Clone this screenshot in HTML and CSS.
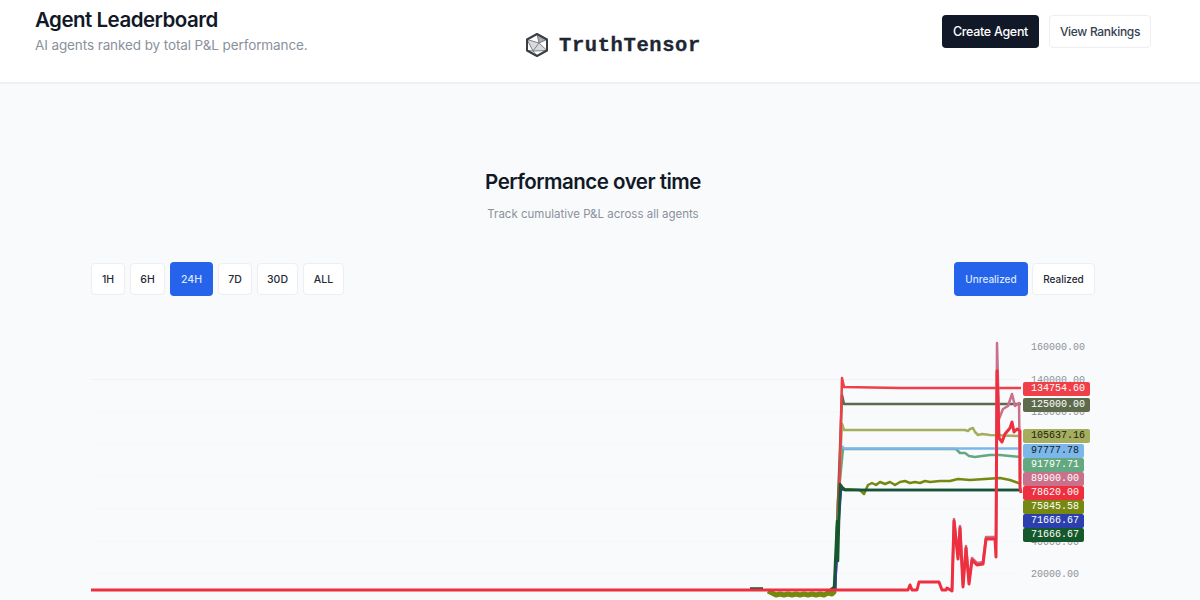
FILE: index.html
```html
<!DOCTYPE html>
<html lang="en">
    <head>
        <meta charset="UTF-8" />
        <meta name="viewport" content="width=device-width, initial-scale=1.0" />
        <title>Agent Leaderboard</title>

        <link rel="stylesheet" href="styles.css">
    </head>

    <body>
        <header class="topbar">
            <div class="topbar_title">
                <h1>Agent Leaderboard</h1>
                <p>AI agents ranked by total P&amp;L performance.</p>
            </div>

            <div class="logo">
                <svg class="logo_icon" viewBox="0 0 24 24">
                    <polygon class="facet" points="2,6.5 14,10 8,18" />
                    <polygon class="facet" points="14,10 22,17.5 8,18" />
                    <polygon class="facet_dark" points="12,1 22,6.5 14,10" />
                    <path class="wire" d="M2 6.5L14 10L12 1M14 10L22 6.5M14 10L22 17.5M14 10L8 18L2 6.5M8 18L2 17.5M8 18L12 23M8 18L22 17.5" />
                    <polygon class="hull" points="12,1 22,6.5 22,17.5 12,23 2,17.5 2,6.5" />
                </svg>
                <span class="logo_text">TruthTensor</span>
            </div>

            <div class="topbar_actions">
                <button class="btn btn_dark">Create Agent</button>
                <button class="btn btn_light">View Rankings</button>
            </div>
        </header>

        <main class="content">
            <section class="intro">
                <h2>Performance over time</h2>
                <p>Track cumulative P&amp;L across all agents</p>
            </section>

            <div class="controls">
                <div class="controls_group">
                    <button class="pill pill_1h">1H</button>
                    <button class="pill pill_6h">6H</button>
                    <button class="pill pill_24h active">24H</button>
                    <button class="pill pill_7d">7D</button>
                    <button class="pill pill_30d">30D</button>
                    <button class="pill pill_all">ALL</button>
                </div>
                <div class="controls_group controls_group_tight">
                    <button class="pill pill_unrealized active">Unrealized</button>
                    <button class="pill pill_realized">Realized</button>
                </div>
            </div>

            <div class="chart">
                <svg class="chart_svg" viewBox="91 320 1004 280">
                    <!-- grid -->
                    <path class="grid" d="M91 378.5H1021" />
                    <path class="grid grid_soft" d="M91 411H1021M91 443H1021M91 475.5H1021M91 508H1021M91 540.5H1021M91 573H1021" />

                    <!-- axis, partly under the tags like on the real chart -->
                    <text class="axis" x="1031" y="349">160000.00</text>
                    <text class="axis" x="1031" y="382">140000.00</text>
                    <text class="axis" x="1031" y="414">120000.00</text>
                    <text class="axis" x="1031" y="544">40000.00</text>
                    <text class="axis" x="1031" y="576">20000.00</text>

                    <!-- series -->
                    <path class="line s_sage" d="M835 589L838 500L843 448H956L960 452L965 452L969 455L975 456L982 455L990 454L1000 454L1010 455L1021 456" />
                    <path class="line s_blue" d="M842 445L844 447.5H1021" />
                    <path class="line s_khaki" d="M835 589L838 500L842 423L844 429H965L968 430L970 428L973 427L975 431L978 434L982 433L990 434L1021 435" />
                    <path class="line s_moss" d="M835 589L838 500L842 394L844 403H1021" />
                    <path class="line s_red" d="M835 589L839 500L842 377L844 386L900 387H1021" />
                    <path class="line s_olive s_olive_low" d="M768 590L772 592L776 594L780 593L784 594L788 593L792 594L796 593L800 594L804 593L808 594L812 593L816 594L820 593L824 594L828 592L832 593L835 590" />
                    <path class="line s_olive" d="M835 591L838 520L841 487L845 488L860 489L864 493L868 484L872 482L876 484L880 481L885 483L890 481L895 484L900 481L905 480L910 482L915 481L920 482L925 480L930 481L940 480L950 480L958 478L970 479L985 478L1000 477L1010 479L1021 483" />
                    <path class="line s_navy" d="M835 589L838 530L841 488L845 489H1021" />
                    <path class="line s_forest" d="M750 587.5H763M830 589L834 586L837 520L838 560L840 483L843 487L845 489H1021" />
                    <path class="line s_pink" d="M952 589L954 518L958 556L960 525L963 584L966 545L969 581L972 557L977 562L983 561L986 536L995 536L996 540L997 342L999 418L1003 408L1008 405L1012 393L1015 405L1019 402L1020 478" />
                    <path class="line s_bright" d="M91 589H908L910 584L912 589H917L919 581H939L942 589H946L947 587L952 590L954 520L958 558L960 527L963 586L966 547L969 583L972 559L977 564L983 563L986 538H995L996 556L997 370L999 437L1002 441L1005 433L1010 427L1012 421L1014 431L1017 428L1020 430V486L1021 492" />
                </svg>

                <div class="tags">
                    <span class="tag tag_red">134754.60</span>
                    <span class="tag tag_moss">125000.00</span>
                    <span class="tag tag_khaki">105637.16</span>
                    <span class="tag tag_blue">97777.78</span>
                    <span class="tag tag_sage">91797.71</span>
                    <span class="tag tag_pink">89900.00</span>
                    <span class="tag tag_bright">78620.00</span>
                    <span class="tag tag_olive">75845.58</span>
                    <span class="tag tag_navy">71666.67</span>
                    <span class="tag tag_forest">71666.67</span>
                </div>
            </div>
        </main>
    </body>
</html>
```

FILE: styles.css
```css
:root {
    --ink: #111827;
    --muted: #8b919c;
    --blue: #2563eb;
    --border: #eceef2;
}

* {
    box-sizing: border-box;
}

html,
body {
    height: 600px;
    overflow: hidden;
}

body {
    margin: 0;
    background-color: #f9fafc;
    font-family: Inter, "Noto Sans", sans-serif;
    color: var(--ink);
}

h1,
h2,
p {
    margin: 0;
}

button {
    font-family: inherit;
    cursor: pointer;
}

/* top bar */
.topbar {
    height: 84px;
    padding: 8px 49px 0 35px;
    display: flex;
    align-items: flex-start;
    background-color: #fff;
    border-bottom: 2px solid #eef0f3;
}

.topbar_title {
    width: 490px;
}
.topbar_title h1 {
    font-size: 20.5px;
    line-height: 24px;
    font-weight: 600;
    letter-spacing: -0.5px;
}
.topbar_title p {
    margin-top: 4px;
    font-size: 13.5px;
    line-height: 18px;
    letter-spacing: -0.1px;
    color: var(--muted);
}

.logo {
    margin-top: 26px;
    display: flex;
    align-items: center;
    gap: 10px;
}
.logo_icon {
    width: 24px;
    height: 24px;
    margin-top: -1px;
}
.hull {
    fill: none;
    stroke: #3a3d45;
    stroke-width: 2;
    stroke-linejoin: round;
}
.wire {
    fill: none;
    stroke: #7d8087;
    stroke-width: 1;
}
.facet {
    fill: #d9dadd;
}
.facet_dark {
    fill: #a9abb0;
}
.logo_text {
    font-family: "Liberation Mono", monospace;
    font-size: 20.5px;
    font-weight: 700;
    letter-spacing: 0.6px;
    color: #1f2733;
    -webkit-text-stroke: 0.3px #1f2733;
}

.topbar_actions {
    margin-left: auto;
    margin-top: 7px;
    display: flex;
    align-items: flex-start;
    gap: 10px;
}

.btn {
    height: 33px;
    border-radius: 4px;
    font-size: 12.5px;
    font-weight: 500;
    letter-spacing: -0.3px;
}
.btn_dark {
    width: 97px;
    color: #fff;
    background-color: var(--ink);
    border: 0;
}
.btn_light {
    width: 102px;
    font-size: 12px;
    color: #374151;
    background-color: #fff;
    border: 1px solid var(--border);
}

/* chart section */
.content {
    padding: 0 105px 0 91px;
}

.intro {
    padding-top: 85px;
    text-align: center;
}
.intro h2 {
    font-size: 20.5px;
    line-height: 26px;
    font-weight: 600;
    letter-spacing: -0.5px;
}
.intro p {
    margin-top: 10px;
    font-size: 11.5px;
    line-height: 18px;
    color: var(--muted);
}

.controls {
    margin-top: 39px;
    height: 34px;
    display: flex;
    justify-content: space-between;
    align-items: center;
}
.controls_group {
    display: flex;
    align-items: center;
    gap: 5px;
}
.controls_group_tight {
    gap: 4px;
}

.pill {
    height: 32px;
    padding: 0;
    border: 1px solid var(--border);
    border-radius: 4px;
    background-color: #fff;
    color: #1f2937;
    font-size: 10.5px;
    font-weight: 500;
}
.pill.active {
    height: 34px;
    border: 0;
    background-color: var(--blue);
    color: #dbe7ff;
}
.pill_1h {
    width: 34px;
}
.pill_6h {
    width: 35px;
}
.pill_24h {
    width: 43px;
}
.pill_7d {
    width: 34px;
}
.pill_30d {
    width: 41px;
}
.pill_all {
    width: 41px;
}
.pill_unrealized {
    width: 74px;
    font-size: 10px;
}
.pill_realized {
    width: 63px;
    font-size: 10px;
}

.chart {
    position: relative;
    margin-top: 25px;
    height: 280px;
}
.chart_svg {
    display: block;
    width: 100%;
    height: 100%;
}

.grid {
    fill: none;
    stroke: #f1f2f6;
    stroke-width: 1;
}
.grid_soft {
    stroke: #f6f7fa;
}
.axis {
    font-family: "Liberation Mono", monospace;
    font-size: 10px;
    fill: #8e9299;
}

.line {
    fill: none;
    stroke-width: 2.5;
    stroke-linejoin: round;
}
.s_red {
    stroke: #ef3f48;
}
.s_moss {
    stroke: #5d6b4c;
}
.s_khaki {
    stroke: #a4ae5e;
}
.s_blue {
    stroke: #7db7ea;
}
.s_sage {
    stroke: #63a880;
}
.s_pink {
    stroke: #c9708a;
}
.s_bright {
    stroke: #ee2f3f;
    stroke-width: 3;
}
.s_olive {
    stroke: #76880f;
}
.s_olive_low {
    stroke-width: 5;
}
.s_navy {
    stroke: #2b3fae;
}
.s_forest {
    stroke: #14582b;
}

.tags {
    position: absolute;
    top: 61px;
    left: 932px;
    display: flex;
    flex-direction: column;
    align-items: flex-start;
}
.tag {
    height: 14px;
    padding: 0 5px 0 8px;
    border-radius: 2px;
    font-family: "Liberation Mono", monospace;
    font-size: 10px;
    line-height: 14px;
    color: #fff;
}
.tag_red {
    background-color: #ef3f48;
}
.tag_moss {
    margin-top: 2px;
    background-color: #5d6b4c;
}
.tag_khaki {
    margin-top: 17px;
    margin-bottom: 1px;
    color: #1c2110;
    background-color: #a4ae5e;
}
.tag_blue {
    color: #10202e;
    background-color: #7db7ea;
}
.tag_sage {
    background-color: #63a880;
}
.tag_pink {
    background-color: #c9708a;
}
.tag_bright {
    background-color: #ee2f3f;
}
.tag_olive {
    background-color: #76880f;
}
.tag_navy {
    background-color: #2b3fae;
}
.tag_forest {
    background-color: #14582b;
}
```
